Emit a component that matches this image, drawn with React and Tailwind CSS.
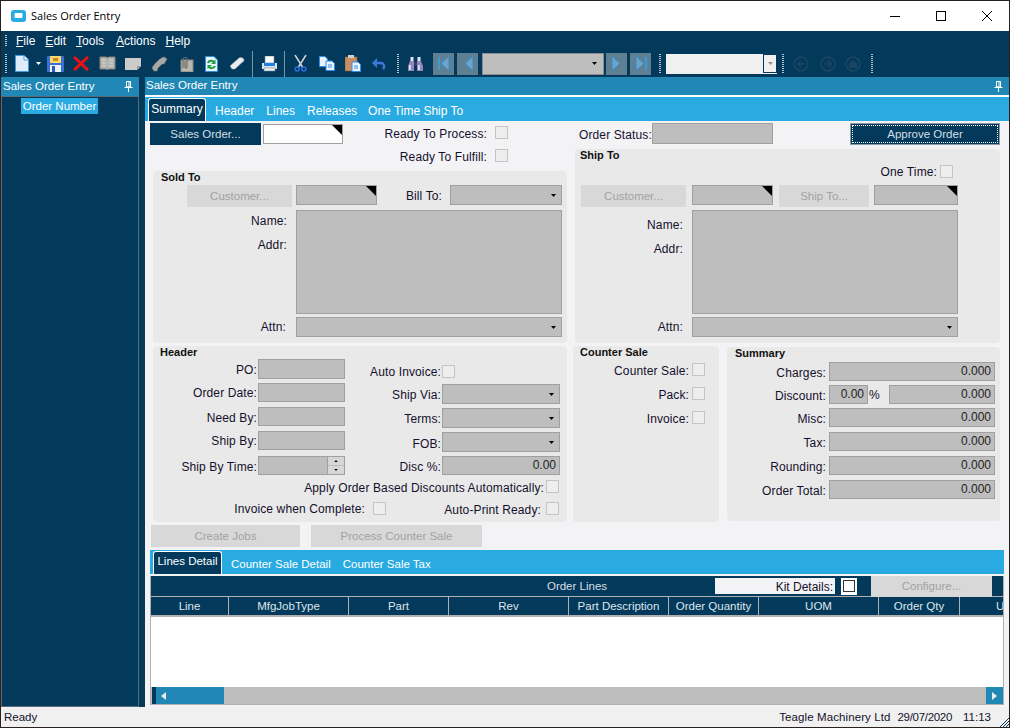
import React from "react";

const Corner = () => (
    <svg className="absolute top-0 right-0" width="10" height="10" viewBox="0 0 10 10">
        <path d="M0 0H10V10Z" fill="#000" />
    </svg>
);

const Caret = ({ className = "" }) => (
    <svg className={className} width="5" height="3" viewBox="0 0 5 3">
        <path d="M0 0H5L2.5 3Z" fill="#000" />
    </svg>
);

const Box = ({ className = "", corner, caret, children }) => (
    <div
        className={`relative flex items-center justify-end border border-[#a0a0a0] bg-[#bebebe] text-[12px] leading-none text-[#222] ${className}`}
    >
        {children}
        {corner && <Corner />}
        {caret && <Caret className="mr-[5px]" />}
    </div>
);

const Check = ({ className = "" }) => (
    <div className={`h-[13px] w-[13px] shrink-0 border border-[#c4c4c4] bg-[#eeeeee] ${className}`} />
);

const Label = ({ className = "", children }) => (
    <div className={`shrink-0 text-right text-[12px] leading-[14px] tracking-[0.12px] whitespace-nowrap text-[#14102c] ${className}`}>
        {children}
    </div>
);

const OffButton = ({ className = "", children }) => (
    <div
        className={`flex shrink-0 items-center justify-center bg-[#d8d8d8] pt-[2px] text-[11.5px] text-[#a2a2a2] ${className}`}
    >
        {children}
    </div>
);

const Title = ({ className = "", children }) => (
    <div className={`text-[11px] leading-[13px] font-bold text-[#111] ${className}`}>{children}</div>
);

const Pin = () => (
    <svg width="9" height="11" viewBox="0 0 9 11">
        <path d="M2.5 .5H6.5V6H2.5ZM5 1V6M.5 6.5H8.5M4.5 7V11" fill="none" stroke="#fff" />
    </svg>
);

const Gripper = ({ className = "" }) => (
    <div className={`w-[2px] shrink-0 bg-[repeating-linear-gradient(#b9c6cf_0_1px,transparent_1px_2px)] ${className}`} />
);

const ToolSep = ({ className = "" }) => <div className={`h-[26px] w-px shrink-0 bg-[#7d95a5] ${className}`} />;

const NewIcon = () => (
    <svg width="14" height="17" viewBox="0 0 14 17">
        <path d="M.5 .5H9L13.5 5V16.5H.5Z" fill="#dcecfa" stroke="#3f9ae0" />
        <path d="M9 .5V5H13.5" fill="#fff" stroke="#3f9ae0" />
    </svg>
);
const SaveIcon = () => (
    <svg width="17" height="16" viewBox="0 0 17 16">
        <rect width="17" height="16" rx="1" fill="#3a70d8" />
        <rect x="3" y="0" width="11" height="7" fill="#fbd66a" />
        <rect x="6" y="2" width="5" height="3" fill="#c98a1c" />
        <rect x="3" y="9" width="11" height="7" fill="#eef3fb" />
        <rect x="5" y="10" width="3" height="6" fill="#2b5bb4" />
    </svg>
);
const RedX = () => (
    <svg width="16" height="15" viewBox="0 0 16 15">
        <path d="M1 1L15 14M15 1L1 14" stroke="#ee1111" strokeWidth="3" />
    </svg>
);
const BookIcon = () => (
    <svg width="17" height="15" viewBox="0 0 17 15">
        <path d="M1 1H7.5L8.5 2L9.5 1H16V13H9.5L8.5 14L7.5 13H1Z" fill="#b4b4b0" stroke="#85857f" />
        <path d="M3 4H6.5M3 7H6.5M3 10H6.5M10.5 4H14M10.5 7H14M10.5 10H14" stroke="#d8d8d4" />
    </svg>
);
const NoteIcon = () => (
    <svg width="16" height="13" viewBox="0 0 16 13">
        <path d="M0 1H16V9L12 13H0Z" fill="#cbcbc9" />
        <path d="M16 9H12V13Z" fill="#9c9c9a" />
    </svg>
);
const PhoneIcon = () => (
    <svg width="17" height="16" viewBox="0 0 17 16">
        <path d="M1 12L3 15H6L7 12L11 8H13L16 3L13 1C9 2 3 8 1 12Z" fill="#a8a8a4" stroke="#7f7f7b" strokeWidth=".6" />
    </svg>
);
const ClipIcon = () => (
    <svg width="16" height="16" viewBox="0 0 16 16">
        <rect x="3" y="4" width="12" height="12" fill="#b8b8b2" stroke="#85857f" />
        <path d="M5 12V3.5A2 2 0 0 1 9 3.5V11A1 1 0 0 1 7 11V5" fill="none" stroke="#6c6c68" strokeWidth="1.2" />
    </svg>
);
const RefreshIcon = () => (
    <svg width="13" height="16" viewBox="0 0 13 16">
        <path d="M.5 .5H9L12.5 4V15.5H.5Z" fill="#e8f4ff" stroke="#2b8fdc" />
        <path d="M3 7C4 4 8 4 9.5 6.5M10 10C9 12.5 5 13 3.5 10.5" fill="none" stroke="#1f9d38" strokeWidth="2" />
        <path d="M10.5 3.5V8H6ZM2.5 13V9H7Z" fill="#1f9d38" />
    </svg>
);
const EraserIcon = () => (
    <svg width="15" height="13" viewBox="0 0 15 13">
        <path d="M0 9L9 1C11 0 14 1 14 3C14 4 13 5 12 5.5L5 12H2Z" fill="#ececec" stroke="#9aa" strokeWidth=".5" />
    </svg>
);
const PrintIcon = () => (
    <svg width="17" height="16" viewBox="0 0 17 16">
        <rect x="4" y="0" width="9" height="7" fill="#fff" stroke="#6a8296" strokeWidth=".6" />
        <path d="M1 7H16V13H1Z" fill="#dfe6ec" />
        <rect x="3" y="7" width="11" height="3" fill="#1f7fe0" />
        <rect x="3" y="12" width="11" height="3" fill="#f4f4f4" stroke="#6a8296" strokeWidth=".6" />
    </svg>
);
const CutIcon = () => (
    <svg width="13" height="17" viewBox="0 0 13 17">
        <path d="M1 0L8.5 12M12 0L4.5 12" stroke="#d6d6d6" strokeWidth="1.5" />
        <circle cx="3.2" cy="14" r="2" fill="none" stroke="#2d6fe0" strokeWidth="1.5" />
        <circle cx="9.8" cy="14" r="2" fill="none" stroke="#2d6fe0" strokeWidth="1.5" />
    </svg>
);
const CopyIcon = () => (
    <svg width="16" height="15" viewBox="0 0 16 15">
        <path d="M.5 .5H6L8.5 3V10.5H.5Z" fill="#e8f3ff" stroke="#2f8fe8" />
        <path d="M7 5H13L15.5 7.5V14.5H7Z" fill="#e8f3ff" stroke="#2f8fe8" />
        <path d="M9 9H13M9 11H13" stroke="#2f8fe8" />
    </svg>
);
const PasteIcon = () => (
    <svg width="16" height="17" viewBox="0 0 16 17">
        <rect x="0" y="2" width="12" height="14" fill="#c98f62" stroke="#8a5d3a" strokeWidth=".6" />
        <rect x="3" y="0" width="6" height="3" fill="#cfcfcf" />
        <path d="M7 7H13L15.5 9.5V16.5H7Z" fill="#e8f3ff" stroke="#2f8fe8" />
        <path d="M9 11H13M9 13H13" stroke="#2f8fe8" />
    </svg>
);
const UndoIcon = () => (
    <svg width="15" height="12" viewBox="0 0 15 12">
        <path d="M3.5 5H9.5A3.5 3.5 0 0 1 11 11" fill="none" stroke="#3b78d8" strokeWidth="2.4" />
        <path d="M5 0V10L0 5Z" fill="#3b78d8" />
    </svg>
);
const BinocularsIcon = () => (
    <svg width="15" height="14" viewBox="0 0 15 14">
        <rect x="2.5" y="0" width="3" height="4" fill="#e6e4f4" />
        <rect x="9.5" y="0" width="3" height="4" fill="#e6e4f4" />
        <path d="M2 4H6V14H0V9Z" fill="#8f88bc" />
        <path d="M9 4H13L15 9V14H9Z" fill="#8f88bc" />
        <rect x="1" y="8" width="2" height="5" fill="#d8d4ee" />
        <rect x="10" y="8" width="2" height="5" fill="#d8d4ee" />
        <rect x="6" y="5" width="3" height="4" fill="#3d3570" />
    </svg>
);

const NavButton = ({ dir, bar }) => (
    <div className="flex h-[22px] w-[21px] shrink-0 items-center justify-center bg-[#5f7f93]">
        <svg width="14" height="15" viewBox="0 0 14 15">
            {dir === "left" ? (
                <>
                    {bar && <path d="M2 1V14" stroke="#3e9bd8" strokeWidth="2" />}
                    <path d="M12 0V15L4 7.5Z" fill="#6aa3cc" stroke="#2f88c8" strokeWidth=".8" />
                </>
            ) : (
                <>
                    {bar && <path d="M12 1V14" stroke="#3e9bd8" strokeWidth="2" />}
                    <path d="M2 0V15L10 7.5Z" fill="#6aa3cc" stroke="#2f88c8" strokeWidth=".8" />
                </>
            )}
        </svg>
    </div>
);

const RoundOff = ({ children }) => (
    <svg className="shrink-0" width="16" height="16" viewBox="0 0 15 15">
        <circle cx="7.5" cy="7.5" r="6.5" fill="none" stroke="#1c4662" strokeWidth="1.5" />
        {children}
    </svg>
);

const columns = [
    ["Line", "w-[78px] justify-center"],
    ["MfgJobType", "w-[120px] justify-center"],
    ["Part", "w-[100px] justify-center"],
    ["Rev", "w-[120px] justify-center"],
    ["Part Description", "w-[100px] justify-center"],
    ["Order Quantity", "w-[90px] justify-center"],
    ["UOM", "w-[120px] justify-center"],
    ["Order Qty", "w-[81px] justify-center"],
    ["U", "flex-1 justify-start pl-[36px]"],
];

const Toolbar = () => (
    <div className="flex h-[27px] shrink-0 items-center pl-[4px]">
        <Gripper className="h-[19px]" />
        <div className="ml-[8px]"><NewIcon /></div>
        <Caret className="ml-[7px] invert" />
        <div className="ml-[6px]"><SaveIcon /></div>
        <div className="ml-[9px]"><RedX /></div>
        <div className="ml-[10px]"><BookIcon /></div>
        <div className="ml-[9px]"><NoteIcon /></div>
        <div className="ml-[10px]"><PhoneIcon /></div>
        <div className="ml-[10px]"><ClipIcon /></div>
        <div className="ml-[11px]"><RefreshIcon /></div>
        <div className="ml-[12px]"><EraserIcon /></div>
        <ToolSep className="ml-[7px]" />
        <div className="ml-[8px]"><PrintIcon /></div>
        <ToolSep className="ml-[6px]" />
        <div className="ml-[9px]"><CutIcon /></div>
        <div className="ml-[12px]"><CopyIcon /></div>
        <div className="ml-[10px]"><PasteIcon /></div>
        <div className="ml-[11px]"><UndoIcon /></div>
        <Gripper className="ml-[10px] h-[19px]" />
        <div className="ml-[9px]"><BinocularsIcon /></div>
        <div className="ml-[10px]"><NavButton dir="left" bar /></div>
        <div className="ml-[3px]"><NavButton dir="left" /></div>
        <div className="ml-[4px] flex h-[22px] w-[122px] items-center justify-end border border-[#8d8d8d] bg-[#bebebe] pr-[6px]">
            <Caret />
        </div>
        <div className="ml-[2px]"><NavButton dir="right" /></div>
        <div className="ml-[3px]"><NavButton dir="right" bar /></div>
        <Gripper className="ml-[8px] h-[19px]" />
        <div className="ml-[5px] flex h-[20px] w-[111px] items-center justify-end bg-[#f0f0f0]">
            <div className="flex h-[19px] w-[14px] items-center justify-center border border-[#033a5c] bg-[#f0f0f0]">
                <Caret className="opacity-40" />
            </div>
        </div>
        <Gripper className="ml-[5px] h-[19px]" />
        <div className="ml-[9px]">
            <RoundOff><path d="M11 7.5H5M7.5 4.5L4.5 7.5L7.5 10.5" fill="none" stroke="#1c4662" strokeWidth="1.5" /></RoundOff>
        </div>
        <div className="ml-[11px]">
            <RoundOff><path d="M4 7.5H10M7.5 4.5L10.5 7.5L7.5 10.5" fill="none" stroke="#1c4662" strokeWidth="1.5" /></RoundOff>
        </div>
        <div className="ml-[9px]">
            <RoundOff><path d="M3.5 7.5L7.5 4L11.5 7.5V11H3.5Z" fill="#1c4662" /></RoundOff>
        </div>
        <Gripper className="ml-[10px] h-[19px]" />
    </div>
);

const SoldToPanel = () => (
    <div className="ml-[3px] h-[172px] w-[414px] rounded-[4px] bg-[#e9e9e9]">
        <Title className="pl-[8px]">Sold To</Title>
        <div className="mt-px flex pl-[34px]">
            <OffButton className="h-[22px] w-[105px]">Customer...</OffButton>
            <Box corner className="ml-[4px] h-[20px] w-[81px]" />
            <Label className="mt-[4px] w-[65px]">Bill To:</Label>
            <Box caret className="ml-[8px] h-[20px] w-[112px]" />
        </div>
        <div className="mt-[3px] flex">
            <div className="w-[134px] pt-[4px]">
                <Label>Name:</Label>
                <Label className="mt-[10px]">Addr:</Label>
            </div>
            <Box className="ml-[9px] h-[104px] w-[266px]" />
        </div>
        <div className="mt-[3px] flex">
            <Label className="mt-[3px] w-[133px]">Attn:</Label>
            <Box caret className="ml-[10px] h-[20px] w-[266px]" />
        </div>
    </div>
);

const ShipToPanel = () => (
    <div className="h-[194px] w-[425px] rounded-[4px] bg-[#e9e9e9]">
        <Title className="pl-[5px]">Ship To</Title>
        <div className="mt-[3px] flex h-[13px] items-center justify-end pr-[47px]">
            <Label>One Time:</Label>
            <Check className="ml-[3px]" />
        </div>
        <div className="mt-[7px] flex pl-[6px]">
            <OffButton className="h-[22px] w-[105px]">Customer...</OffButton>
            <Box corner className="ml-[6px] h-[20px] w-[81px]" />
            <OffButton className="ml-[6px] h-[22px] w-[90px]">Ship To...</OffButton>
            <Box corner className="ml-[5px] h-[20px] w-[84px]" />
        </div>
        <div className="mt-[3px] flex">
            <div className="w-[108px] pt-[8px]">
                <Label>Name:</Label>
                <Label className="mt-[10px]">Addr:</Label>
            </div>
            <Box className="ml-[9px] h-[104px] w-[266px]" />
        </div>
        <div className="mt-[3px] flex">
            <Label className="mt-[3px] w-[108px]">Attn:</Label>
            <Box caret className="ml-[9px] h-[20px] w-[266px]" />
        </div>
    </div>
);

const HeaderPanel = () => (
    <div className="h-[176px] w-[414px] rounded-[4px] bg-[#e9e9e9]">
        <Title className="pl-[7px]">Header</Title>
        <div className="flex">
            <div className="w-[192px]">
                <div className="flex items-center">
                    <Label className="w-[104px] pt-[2px]">PO:</Label>
                    <Box className="ml-px h-[20px] w-[87px]" />
                </div>
                <div className="mt-[4px] flex items-center">
                    <Label className="w-[104px]">Order Date:</Label>
                    <Box className="ml-px h-[19px] w-[87px]" />
                </div>
                <div className="mt-[5px] flex items-center">
                    <Label className="w-[104px] pt-[2px]">Need By:</Label>
                    <Box className="ml-px h-[19px] w-[87px]" />
                </div>
                <div className="mt-[5px] flex items-center">
                    <Label className="w-[104px]">Ship By:</Label>
                    <Box className="ml-px h-[19px] w-[87px]" />
                </div>
                <div className="mt-[6px] flex items-center">
                    <Label className="w-[104px] pt-[2px]">Ship By Time:</Label>
                    <Box className="ml-px h-[19px] w-[87px]">
                        <div className="flex h-full w-[17px] flex-col gap-px border-l border-[#a0a0a0]">
                            <div className="flex flex-1 items-center justify-center bg-[#d6d6d6]">
                                <Caret className="h-[2px] w-[4px] rotate-180" />
                            </div>
                            <div className="flex flex-1 items-center justify-center bg-[#d6d6d6]">
                                <Caret className="h-[2px] w-[4px]" />
                            </div>
                        </div>
                    </Box>
                </div>
            </div>
            <div>
                <div className="mt-[6px] flex h-[13px] items-center">
                    <Label className="w-[96px]">Auto Invoice:</Label>
                    <Check className="ml-px" />
                </div>
                <div className="mt-[6px] flex items-center">
                    <Label className="w-[96px] pt-[2px]">Ship Via:</Label>
                    <Box caret className="ml-px h-[20px] w-[118px]" />
                </div>
                <div className="mt-[4px] flex items-center">
                    <Label className="w-[96px] pt-[2px]">Terms:</Label>
                    <Box caret className="ml-px h-[20px] w-[118px]" />
                </div>
                <div className="mt-[4px] flex items-center">
                    <Label className="w-[96px] pt-[4px]">FOB:</Label>
                    <Box caret className="ml-px h-[20px] w-[118px]" />
                </div>
                <div className="mt-[4px] flex items-center">
                    <Label className="w-[96px] pt-[2px]">Disc %:</Label>
                    <Box className="ml-px h-[19px] w-[118px] pr-[3px] pb-px">0.00</Box>
                </div>
            </div>
        </div>
        <div className="mt-[5px] flex h-[13px] items-center justify-end pr-[8px]">
            <Label className="pt-[2px]">Apply Order Based Discounts Automatically:</Label>
            <Check className="ml-[2px]" />
        </div>
        <div className="mt-[9px] flex h-[13px] items-center">
            <Label className="w-[212px]">Invoice when Complete:</Label>
            <Check className="ml-[8px]" />
            <Label className="w-[155px] pt-[3px]">Auto-Print Ready:</Label>
            <Check className="ml-[5px]" />
        </div>
    </div>
);

const CounterRow = ({ label, className = "" }) => (
    <div className={`flex h-[13px] items-center ${className}`}>
        <Label className="w-[116px] pt-[2px]">{label}</Label>
        <Check className="ml-[3px]" />
    </div>
);

const CounterPanel = () => (
    <div className="ml-[6px] h-[176px] w-[146px] rounded-[4px] bg-[#e9e9e9]">
        <Title className="pl-[7px]">Counter Sale</Title>
        <CounterRow label="Counter Sale:" className="mt-[4px]" />
        <CounterRow label="Pack:" className="mt-[11px]" />
        <CounterRow label="Invoice:" className="mt-[11px]" />
    </div>
);

const SummaryRow = ({ label, className = "" }) => (
    <div className={`flex items-center ${className}`}>
        <Label className="w-[99px] pt-[2px]">{label}</Label>
        <Box className="ml-[3px] h-[19px] w-[166px] pr-[3px] pb-px">0.000</Box>
    </div>
);

const SummaryPanel = () => (
    <div className="mt-px ml-[8px] h-[174px] w-[273px] rounded-[4px] bg-[#e9e9e9]">
        <Title className="pl-[8px]">Summary</Title>
        <SummaryRow label="Charges:" className="mt-[2px]" />
        <div className="mt-[4px] flex items-center">
            <Label className="w-[99px] pt-[2px]">Discount:</Label>
            <Box className="ml-[3px] h-[19px] w-[39px] pr-[3px] pb-px">0.00</Box>
            <span className="ml-px w-[20px] text-[12px] leading-none text-[#14102c]">%</span>
            <Box className="h-[19px] w-[106px] pr-[3px] pb-px">0.000</Box>
        </div>
        <SummaryRow label="Misc:" className="mt-[4px]" />
        <SummaryRow label="Tax:" className="mt-[5px]" />
        <SummaryRow label="Rounding:" className="mt-[5px]" />
        <SummaryRow label="Order Total:" className="mt-[5px]" />
    </div>
);

const LinesGrid = () => (
    <div className="mt-[2px] flex h-[129px] flex-col border-x border-b border-[#b0b0b0] bg-white">
        <div className="relative flex h-[21px] shrink-0 items-center border-b border-[#b0b0b0] bg-[#033a5c]">
            <div className="ml-[387px] w-[78px] pt-[2px] text-center text-[11.5px] text-[#d8dee3]">Order Lines</div>
            <div className="ml-[99px] flex h-[16px] w-[120px] items-center justify-end bg-[#f3f3f6] pr-[2px] pt-px text-[12px] text-[#14102c]">
                Kit Details:
            </div>
            <div className="ml-[6px] flex h-[17px] w-[16px] items-center justify-center bg-white">
                <div className="h-[12px] w-[12px] border border-[#333]" />
            </div>
            <OffButton className="ml-[14px] h-[21px] w-[121px]">Configure...</OffButton>
        </div>
        <div className="flex h-[20px] shrink-0 border-b-2 border-[#b0b0b0] bg-[#033a5c]">
            {columns.map(([name, width]) => (
                <div
                    key={name}
                    className={`flex items-center overflow-hidden border-r border-[#b0b0b0] pt-[2px] text-[11.5px] text-[#dfe5ea] last:border-r-0 ${width}`}
                >
                    {name}
                </div>
            ))}
        </div>
        <div className="flex-1" />
        <div className="flex h-[17px] shrink-0 items-stretch bg-[#bdbdbd]">
            <div className="ml-px w-[4px] bg-[#033a5c]" />
            <div className="flex w-[68px] items-center bg-[#2188b6] pl-[5px]">
                <svg width="5" height="8" viewBox="0 0 5 8"><path d="M5 0V8L0 4Z" fill="#e8eef2" /></svg>
            </div>
            <div className="flex-1" />
            <div className="flex w-[17px] items-center justify-center bg-[#2188b6]">
                <svg width="5" height="8" viewBox="0 0 5 8"><path d="M0 0V8L5 4Z" fill="#e8eef2" /></svg>
            </div>
        </div>
    </div>
);

const App = () => {
    return (
        <div className="flex h-[728px] w-[1010px] flex-col overflow-hidden border border-[#2b2020] bg-[#033a5c] font-['Liberation_Sans',Arial,sans-serif]">
            <div className="flex h-[30px] shrink-0 items-center bg-white pl-[10px]">
                <svg width="15" height="12" viewBox="0 0 15 12">
                    <rect width="15" height="12" rx="3" fill="#29abe2" />
                    <rect x="3.5" y="3" width="8" height="5" rx="1" fill="#fff" />
                </svg>
                <span className="ml-[5px] font-['Open_Sans',sans-serif] text-[11px] text-black">Sales Order Entry</span>
                <div className="ml-auto flex items-center">
                    <svg width="10" height="1" viewBox="0 0 10 1"><path d="M0 .5H10" stroke="#000" /></svg>
                    <svg className="ml-[36px]" width="10" height="10" viewBox="0 0 10 10"><rect x=".5" y=".5" width="9" height="9" fill="none" stroke="#000" /></svg>
                    <svg className="ml-[36px] mr-[17px]" width="10" height="10" viewBox="0 0 10 10"><path d="M0 0L10 10M10 0L0 10" stroke="#000" /></svg>
                </div>
            </div>

            <div className="flex h-[19px] shrink-0 items-center pl-[4px] text-[12px] text-white">
                <Gripper className="h-[12px]" />
                <span className="ml-[9px] pt-px"><span className="underline">F</span>ile</span>
                <span className="ml-[10px] pt-px"><span className="underline">E</span>dit</span>
                <span className="ml-[10px] pt-px"><span className="underline">T</span>ools</span>
                <span className="ml-[12px] pt-px"><span className="underline">A</span>ctions</span>
                <span className="ml-[10px] pt-px"><span className="underline">H</span>elp</span>
            </div>

            <Toolbar />

            <div className="flex min-h-0 flex-1">
                <div className="flex w-[138px] shrink-0 flex-col">
                    <div className="flex h-[19px] shrink-0 items-center justify-between bg-[#2188b6] pr-[6px] pl-[2px] text-[11.5px] text-white">
                        Sales Order Entry
                        <Pin />
                    </div>
                    <div className="flex-1 border border-[#5c6a74] bg-[#033a5c] pt-px pl-[19px]">
                        <div className="flex h-[16px] w-[77px] items-center justify-center bg-[#29abe2] pt-px text-[11.5px] text-white">
                            Order Number
                        </div>
                    </div>
                </div>
                <div className="w-[6px] shrink-0" />
                <div className="flex min-w-0 flex-1 flex-col bg-[#f3f3f6]">
                    <div className="flex h-[18px] shrink-0 items-center justify-between bg-[#2188b6] pr-[6px] pl-px text-[11.5px] text-white">
                        Sales Order Entry
                        <Pin />
                    </div>
                    <div className="h-[2px] shrink-0 bg-white" />
                    <div className="flex h-[24px] shrink-0 items-end bg-[#29abe2] pl-[3px] text-[12px] text-white">
                        <div className="flex h-[23px] w-[58px] items-center justify-center rounded-t-[3px] border-x border-t border-white bg-[#033a5c] pb-[2px]">
                            Summary
                        </div>
                        <span className="mb-px ml-[9px]">Header</span>
                        <span className="mb-px ml-[12px]">Lines</span>
                        <span className="mb-px ml-[12px]">Releases</span>
                        <span className="mb-px ml-[11px]">One Time Ship To</span>
                    </div>

                    <div className="flex flex-1 flex-col pr-[5px] pl-[5px]">
                        <div className="flex pt-[2px]">
                            <div className="w-[417px] shrink-0">
                                <div className="flex h-[48px]">
                                    <div className="flex h-[22px] w-[111px] items-center justify-center bg-[#033a5c] pt-[2px] text-[11.5px] text-[#d8dee3]">
                                        Sales Order...
                                    </div>
                                    <div className="relative mt-px ml-[2px] h-[20px] w-[80px] border border-[#a0a0a0] bg-white">
                                        <Corner />
                                    </div>
                                    <div className="flex w-[165px] flex-col items-end pt-[3px]">
                                        <div className="flex h-[13px] items-center">
                                            <Label className="pt-[2px]">Ready To Process:</Label>
                                            <Check className="ml-[8px]" />
                                        </div>
                                        <div className="mt-[10px] flex h-[13px] items-center">
                                            <Label className="pt-[2px]">Ready To Fulfill:</Label>
                                            <Check className="ml-[8px]" />
                                        </div>
                                    </div>
                                </div>
                                <SoldToPanel />
                            </div>
                            <div className="ml-[8px] w-[425px] shrink-0">
                                <div className="flex h-[26px] items-start">
                                    <Label className="mt-[5px] ml-[4px] w-[71px]">Order Status:</Label>
                                    <Box className="ml-[2px] h-[21px] w-[121px]" />
                                    <div className="ml-auto flex h-[22px] w-[150px] items-center justify-center border border-[#8a9aa6] bg-[#033a5c] p-px">
                                        <div className="flex h-full w-full items-center justify-center border border-dotted border-white pt-[2px] text-[11.5px] text-[#d8dee3]">
                                            Approve Order
                                        </div>
                                    </div>
                                </div>
                                <ShipToPanel />
                            </div>
                        </div>

                        <div className="mt-[3px] flex pl-[3px]">
                            <HeaderPanel />
                            <CounterPanel />
                            <SummaryPanel />
                        </div>

                        <div className="mt-[3px] flex pl-px">
                            <OffButton className="h-[22px] w-[149px]">Create Jobs</OffButton>
                            <OffButton className="ml-[11px] h-[22px] w-[171px]">Process Counter Sale</OffButton>
                        </div>

                        <div className="mt-[3px] flex h-[24px] shrink-0 items-end bg-[#29abe2] pl-[3px] text-[11.5px] text-white">
                            <div className="flex h-[23px] w-[69px] items-center justify-center rounded-t-[3px] border-x border-t border-white bg-[#033a5c] pb-[2px]">
                                Lines Detail
                            </div>
                            <span className="mb-px ml-[9px]">Counter Sale Detail</span>
                            <span className="mb-px ml-[12px]">Counter Sale Tax</span>
                        </div>

                        <LinesGrid />
                    </div>
                </div>
            </div>

            <div className="flex h-[20px] shrink-0 items-center bg-[#f0f0f0] pl-[3px] text-[11.5px] text-[#14102c]">
                <span className="pt-[2px]">Ready</span>
                <span className="ml-auto pt-[2px] tracking-[0.1px]">Teagle Machinery Ltd</span>
                <span className="ml-[7px] pt-[2px] tracking-[-0.3px]">29/07/2020</span>
                <span className="ml-[11px] pt-[2px]">11:13</span>
                <svg className="ml-[9px] self-end" width="9" height="9" viewBox="0 0 9 9">
                    <path d="M0 9L9 0M3 9L9 3M6 9L9 6" stroke="#033a5c" />
                </svg>
            </div>
        </div>
    );
};

export default App;
